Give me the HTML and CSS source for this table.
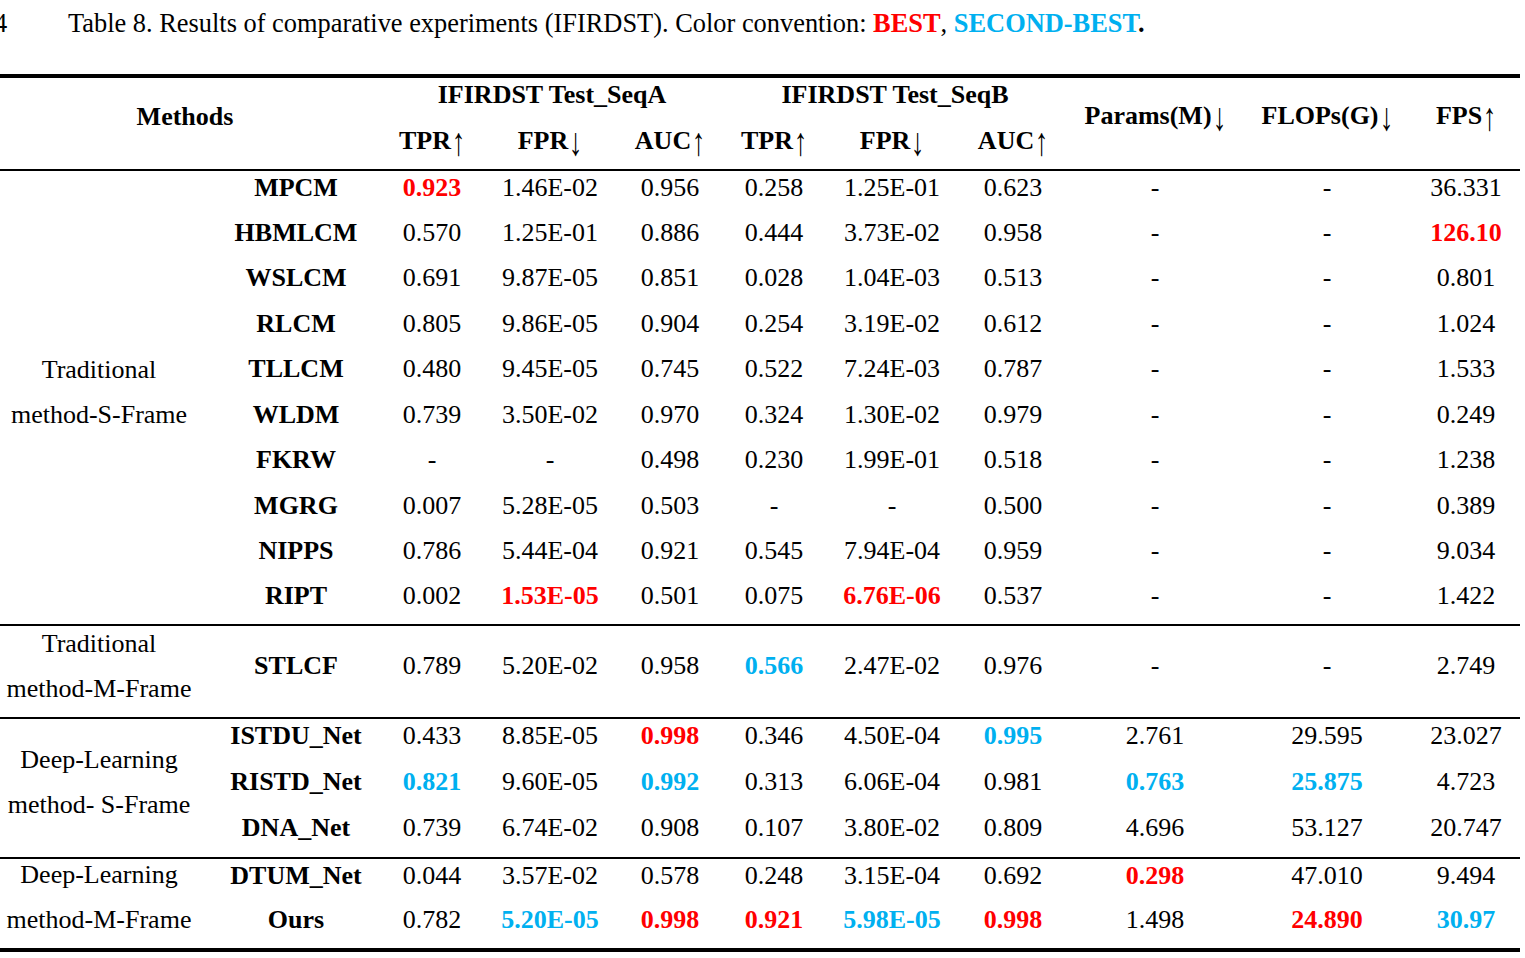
FILE: index.html
```html
<!DOCTYPE html>
<html>
<head>
<meta charset="utf-8">
<link rel="stylesheet" href="styles.css">
</head>
<body>
<div class="caption">
  <span class="pgnum">4</span>
  <span class="captext">Table 8. Results of comparative experiments (IFIRDST). Color convention: <b class="best">BEST</b>, <b class="second">SECOND-BEST</b><b>.</b></span>
</div>
<table class="results">
  <colgroup>
    <col class="c-group"><col class="c-name"><col class="c-tpra"><col class="c-fpra"><col class="c-auca">
    <col class="c-tprb"><col class="c-fprb"><col class="c-aucb"><col class="c-params"><col class="c-flops"><col class="c-fps">
  </colgroup>
  <thead>
    <tr>
      <th colspan="2" rowspan="2" class="methods">Methods</th>
      <th colspan="3">IFIRDST Test_SeqA</th>
      <th colspan="3">IFIRDST Test_SeqB</th>
      <th rowspan="2" class="single">Params(M)<span class="arr">↓</span></th>
      <th rowspan="2" class="single">FLOPs(G)<span class="arr">↓</span></th>
      <th rowspan="2" class="single">FPS<span class="arr">↑</span></th>
    </tr>
    <tr>
      <th>TPR<span class="arr">↑</span></th><th>FPR<span class="arr">↓</span></th><th>AUC<span class="arr">↑</span></th>
      <th>TPR<span class="arr">↑</span></th><th>FPR<span class="arr">↓</span></th><th>AUC<span class="arr">↑</span></th>
    </tr>
  </thead>
  <tbody class="g1">
    <tr><td rowspan="10" class="group"><div class="gtext">Traditional<br>method-S-Frame</div></td><th>MPCM</th><td class="best">0.923</td><td>1.46E-02</td><td>0.956</td><td>0.258</td><td>1.25E-01</td><td>0.623</td><td>-</td><td>-</td><td>36.331</td></tr>
    <tr><th>HBMLCM</th><td>0.570</td><td>1.25E-01</td><td>0.886</td><td>0.444</td><td>3.73E-02</td><td>0.958</td><td>-</td><td>-</td><td class="best">126.10</td></tr>
    <tr><th>WSLCM</th><td>0.691</td><td>9.87E-05</td><td>0.851</td><td>0.028</td><td>1.04E-03</td><td>0.513</td><td>-</td><td>-</td><td>0.801</td></tr>
    <tr><th>RLCM</th><td>0.805</td><td>9.86E-05</td><td>0.904</td><td>0.254</td><td>3.19E-02</td><td>0.612</td><td>-</td><td>-</td><td>1.024</td></tr>
    <tr><th>TLLCM</th><td>0.480</td><td>9.45E-05</td><td>0.745</td><td>0.522</td><td>7.24E-03</td><td>0.787</td><td>-</td><td>-</td><td>1.533</td></tr>
    <tr><th>WLDM</th><td>0.739</td><td>3.50E-02</td><td>0.970</td><td>0.324</td><td>1.30E-02</td><td>0.979</td><td>-</td><td>-</td><td>0.249</td></tr>
    <tr><th>FKRW</th><td>-</td><td>-</td><td>0.498</td><td>0.230</td><td>1.99E-01</td><td>0.518</td><td>-</td><td>-</td><td>1.238</td></tr>
    <tr><th>MGRG</th><td>0.007</td><td>5.28E-05</td><td>0.503</td><td>-</td><td>-</td><td>0.500</td><td>-</td><td>-</td><td>0.389</td></tr>
    <tr><th>NIPPS</th><td>0.786</td><td>5.44E-04</td><td>0.921</td><td>0.545</td><td>7.94E-04</td><td>0.959</td><td>-</td><td>-</td><td>9.034</td></tr>
    <tr><th>RIPT</th><td>0.002</td><td class="best">1.53E-05</td><td>0.501</td><td>0.075</td><td class="best">6.76E-06</td><td>0.537</td><td>-</td><td>-</td><td>1.422</td></tr>
  </tbody>
  <tbody class="g2">
    <tr><td class="group"><div class="gtext">Traditional<br>method-M-Frame</div></td><th>STLCF</th><td>0.789</td><td>5.20E-02</td><td>0.958</td><td class="second">0.566</td><td>2.47E-02</td><td>0.976</td><td>-</td><td>-</td><td>2.749</td></tr>
  </tbody>
  <tbody class="g3">
    <tr><td rowspan="3" class="group"><div class="gtext">Deep-Learning<br>method- S-Frame</div></td><th>ISTDU_Net</th><td>0.433</td><td>8.85E-05</td><td class="best">0.998</td><td>0.346</td><td>4.50E-04</td><td class="second">0.995</td><td>2.761</td><td>29.595</td><td>23.027</td></tr>
    <tr><th>RISTD_Net</th><td class="second">0.821</td><td>9.60E-05</td><td class="second">0.992</td><td>0.313</td><td>6.06E-04</td><td>0.981</td><td class="second">0.763</td><td class="second">25.875</td><td>4.723</td></tr>
    <tr><th>DNA_Net</th><td>0.739</td><td>6.74E-02</td><td>0.908</td><td>0.107</td><td>3.80E-02</td><td>0.809</td><td>4.696</td><td>53.127</td><td>20.747</td></tr>
  </tbody>
  <tbody class="g4">
    <tr><td rowspan="2" class="group"><div class="gtext">Deep-Learning<br>method-M-Frame</div></td><th>DTUM_Net</th><td>0.044</td><td>3.57E-02</td><td>0.578</td><td>0.248</td><td>3.15E-04</td><td>0.692</td><td class="best">0.298</td><td>47.010</td><td>9.494</td></tr>
    <tr><th>Ours</th><td>0.782</td><td class="second">5.20E-05</td><td class="best">0.998</td><td class="best">0.921</td><td class="second">5.98E-05</td><td class="best">0.998</td><td>1.498</td><td class="best">24.890</td><td class="second">30.97</td></tr>
  </tbody>
</table>
</body>
</html>
```

FILE: styles.css
```css
html, body {
  margin: 0;
  padding: 0;
  background: #ffffff;
}
body {
  font-family: "Liberation Serif", "Times New Roman", serif;
  font-size: 26px;
  color: #000000;
  overflow: hidden;
}
.caption {
  display: flex;
  align-items: baseline;
  margin-top: 8px;
  height: 30px;
  line-height: 30px;
  font-size: 26.4px;
}
.pgnum {
  margin-left: -6px;
  width: 74px;
  flex: none;
}
.captext {
  white-space: nowrap;
}
.best { color: #ff0000; font-weight: bold; }
.second { color: #00b0f0; font-weight: bold; }

.arr {
  display: inline-block;
  font-weight: normal;
  transform: scale(1.05, 1.5) translateY(1px);
  margin-left: 1px;
}

.results {
  margin-top: 36px;
  width: 1520px;
  border-collapse: collapse;
  table-layout: fixed;
  border-top: 4px solid #000;
  border-bottom: 4px solid #000;
}
.c-group { width: 210px; }
.c-name { width: 172px; }
.c-tpra { width: 100px; }
.c-fpra { width: 136px; }
.c-auca { width: 104px; }
.c-tprb { width: 104px; }
.c-fprb { width: 132px; }
.c-aucb { width: 110px; }
.c-params { width: 174px; }
.c-flops { width: 170px; }
.c-fps { width: 108px; }

.results th,
.results td {
  padding: 0 0 11px 0;
  line-height: 30px;
  text-align: center;
  vertical-align: middle;
  white-space: nowrap;
}
.results tr { height: 45.5px; }
.results thead tr { height: 47px; }
.results th { font-weight: bold; }
.results th.methods { padding-right: 12px; padding-bottom: 14px; }
.results th.single { padding-bottom: 15px; }
.results td.group {
  padding: 0 12px 0 0;
}
.gtext {
  line-height: 45px;
  margin-top: -12px;
}
.results thead { border-bottom: 2px solid #000; }
.g2, .g3, .g4 { border-top: 2px solid #000; }
.g2 tr { height: 93px; }
.g3 tr { height: 46.5px; }
.g4 tr { height: 46px; }
```
